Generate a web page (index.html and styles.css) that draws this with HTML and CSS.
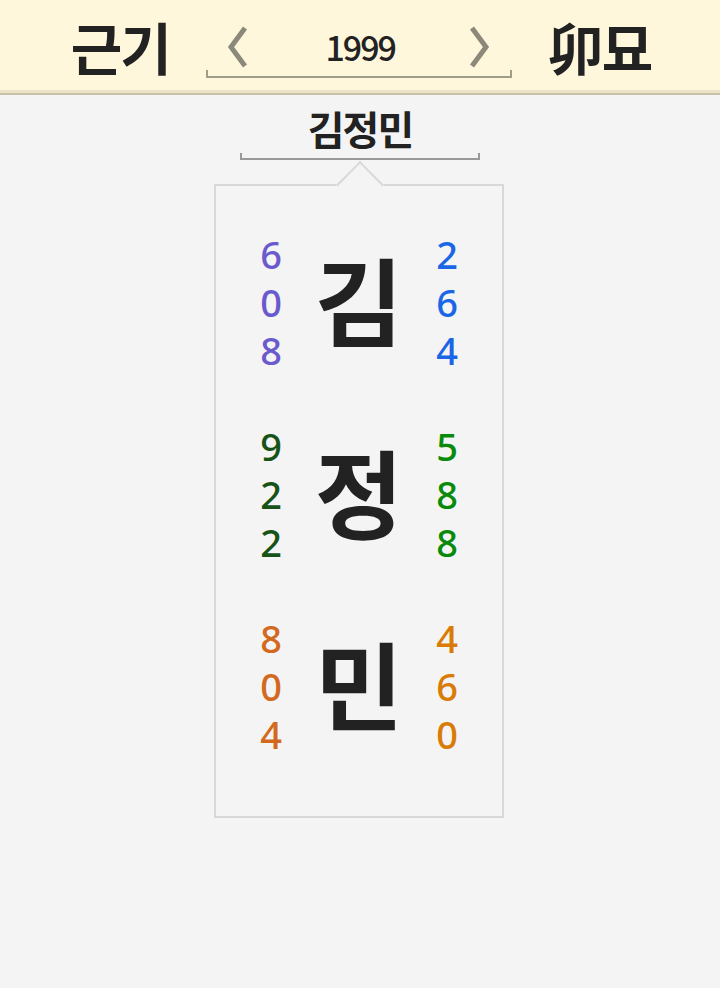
FILE: index.html
```html
<!DOCTYPE html>
<html lang="ko">
<head>
<meta charset="utf-8">
<link rel="stylesheet" href="styles.css">
</head>
<body>
<header class="top">
  <div class="ganji">근기</div>
  <div class="year">
    <div class="year-row">
      <svg class="chev" viewBox="0 0 24 44" width="24" height="44"><polyline points="20,3 6,22 20,41" fill="none" stroke="#8b8a7a" stroke-width="5"/></svg>
      <span class="year-num">1999</span>
      <svg class="chev" viewBox="0 0 24 44" width="24" height="44"><polyline points="4,3 18,22 4,41" fill="none" stroke="#8b8a7a" stroke-width="5"/></svg>
    </div>
    <div class="bracket year-bracket"></div>
  </div>
  <div class="ganji">卯묘</div>
</header>
<main class="main">
  <div class="name">
    <div class="name-text">김정민</div>
    <div class="bracket name-bracket"></div>
  </div>
  <div class="card">
    <div class="row">
      <div class="nums purple"><span>6</span><span>0</span><span>8</span></div>
      <div class="char">김</div>
      <div class="nums blue"><span>2</span><span>6</span><span>4</span></div>
    </div>
    <div class="row">
      <div class="nums dgreen"><span>9</span><span>2</span><span>2</span></div>
      <div class="char">정</div>
      <div class="nums green"><span>5</span><span>8</span><span>8</span></div>
    </div>
    <div class="row">
      <div class="nums choc"><span>8</span><span>0</span><span>4</span></div>
      <div class="char">민</div>
      <div class="nums orange"><span>4</span><span>6</span><span>0</span></div>
    </div>
  </div>
</main>
</body>
</html>
```
FILE: styles.css
```css
* { box-sizing: border-box; }
html, body { margin: 0; padding: 0; }
body {
  background: #f4f4f4;
  font-family: "Noto Sans CJK KR", "Noto Sans", sans-serif;
  color: #222;
  width: 720px;
  height: 988px;
  overflow: hidden;
}
.top {
  height: 95px;
  background: #fff7dc;
  border-bottom: 2px solid #c9c2a6;
  box-shadow: inset 0 -3px 0 #ebe4c8;
  display: flex;
  justify-content: center;
  align-items: flex-start;
  gap: 36px;
  padding-left: 2px;
}
.ganji {
  font-size: 56px;
  font-weight: 700;
  line-height: 56px;
  margin-top: 18px;
  letter-spacing: -2px;
}
.year {
  width: 306px;
  margin-top: 24px;
  display: flex;
  flex-direction: column;
}
.year-row {
  height: 46px;
  display: flex;
  align-items: center;
  justify-content: space-between;
  padding: 0 20px 0 19px;
}
.year-num {
  font-size: 34px;
  font-weight: 500;
  line-height: 40px;
  letter-spacing: -2px;
  margin-left: 4px;
}
.chev { display: block; }
.bracket {
  height: 8px;
  border: 2px solid #a09d88;
  border-top: none;
}
.year-bracket { border-color: #a09d88; }
.main {
  display: flex;
  flex-direction: column;
  align-items: center;
  padding-top: 8px;
}
.name {
  width: 240px;
  display: flex;
  flex-direction: column;
}
.name-text {
  text-align: center;
  font-size: 40px;
  font-weight: 700;
  line-height: 50px;
  letter-spacing: -2px;
}
.name-bracket {
  height: 7px;
  border-color: #999;
}
.card {
  margin-top: 24px;
  width: 290px;
  height: 634px;
  border: 2px solid #d8d8d8;
  position: relative;
  padding-top: 44px;
  display: flex;
  flex-direction: column;
  gap: 48px;
  margin-left: -2px;
}
.card::before {
  content: "";
  position: absolute;
  width: 32px;
  height: 32px;
  left: 127px;
  top: -18px;
  background: #f4f4f4;
  border-left: 2px solid #d8d8d8;
  border-top: 2px solid #d8d8d8;
  transform: rotate(45deg);
}
.row {
  display: grid;
  grid-template-columns: 40px 104px 40px;
  column-gap: 16px;
  justify-content: center;
  align-items: center;
}
.nums {
  display: flex;
  flex-direction: column;
  align-items: center;
  font-size: 38px;
  font-weight: 500;
  line-height: 48px;
  font-family: "Noto Sans", sans-serif;
}
.char {
  font-size: 96px;
  font-weight: 700;
  text-align: center;
  line-height: 1;
  color: #222;
  margin-top: -8px;
}
.purple { color: #6a5acd; }
.blue { color: #1a66e6; }
.dgreen { color: #175217; }
.green { color: #0a8a0a; }
.choc { color: #d2691e; }
.orange { color: #d97b06; }
```
